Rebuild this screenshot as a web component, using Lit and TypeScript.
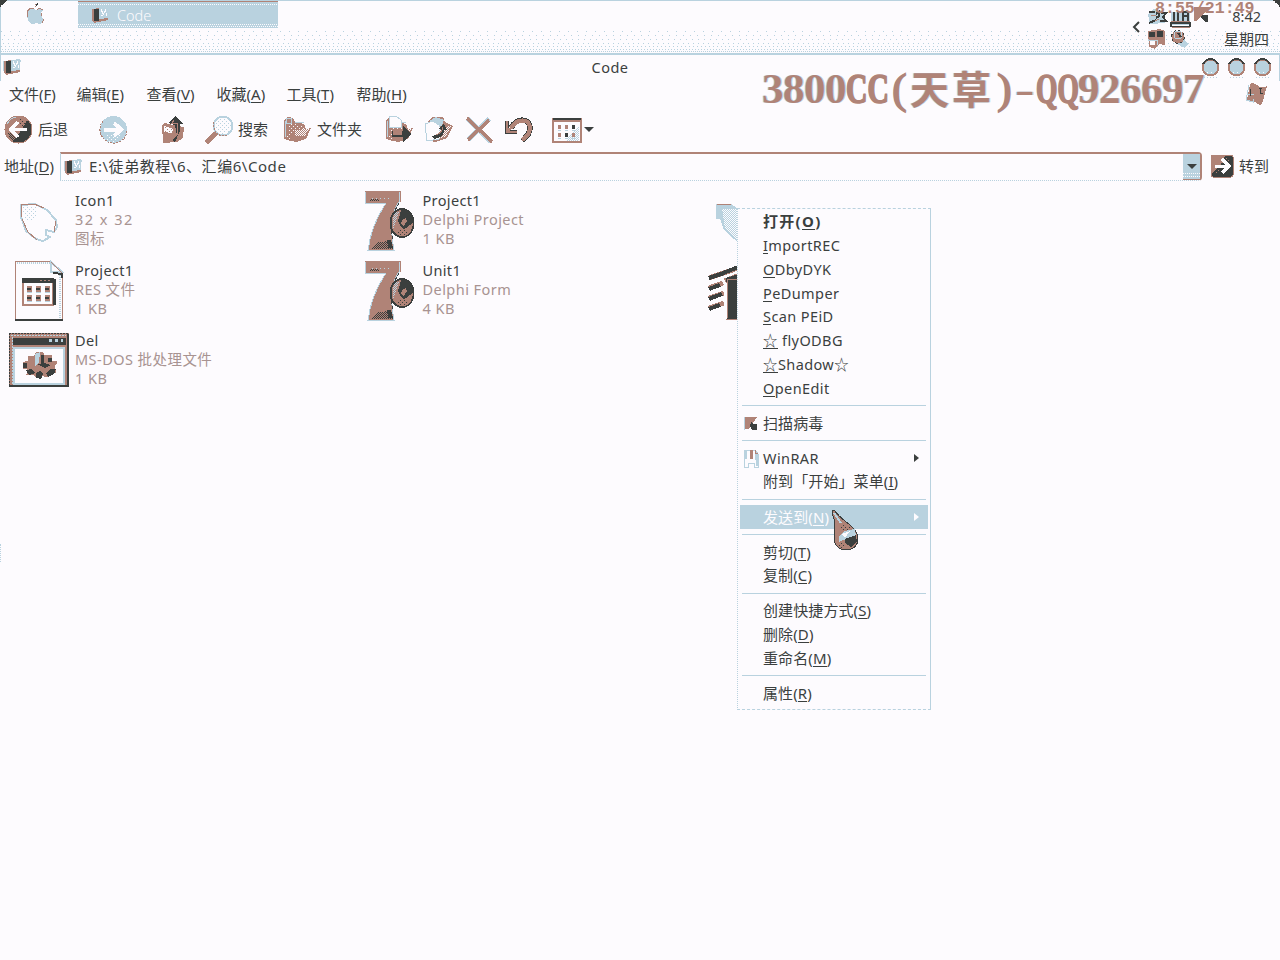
import { LitElement, html, svg, css, nothing } from "lit";
import { customElement } from "lit/decorators.js";

const B = "#b9d2df", R = "#b08377", K = "#3b3f3e", W = "#fdfbfe";

const dots = (id: string, fg: string, size = 2) => svg`<pattern id=${id} width=${size} height=${size} patternUnits="userSpaceOnUse"><rect width="1" height="1" fill=${fg}/>${size > 2 ? svg`<rect x=${size / 2} y=${size / 2} width="1" height="1" fill=${fg}/>` : svg`<rect x="1" y="1" width="1" height="1" fill=${fg}/>`}</pattern>`;
const defs = svg`<defs>${dots("b2", B)}${dots("b4", B, 4)}${dots("r2", R)}${dots("r4", R, 4)}${dots("k2", K)}${dots("k4", K, 4)}${dots("w2", W)}${dots("w4", W, 4)}</defs>`;

const draw = (w: number, h: number, body: unknown) => html`<svg width=${w} height=${h} viewBox="0 0 ${w} ${h}" shape-rendering="crispEdges">${defs}${body}</svg>`;

const book = draw(18, 16, svg`<path d="M1 2L8 1V12L17 11V13L3 16L1 13Z" fill=${R}/><path d="M8 1L17 0V11L8 12Z" fill=${B}/><path d="M3 2H8V14H3Z" fill=${K}/><path d="M10 2V4H11V6H12V8M14 2V4H13V6M15 6V9M10 8H12" fill="none" stroke=${W}/><path d="M0 2V12M17 1V3" stroke=${B}/>`);
const apple = draw(20, 24, svg`<path d="M10 8C6 5 1 7 1 13C1 18 4 22 7 22L10 21L13 22C16 22 18 19 18 17C14 15 14 10 17 8C15 6 12 6 10 8Z" fill=${B}/><path d="M8 7C4 5 1 8 1 12V15M17 8C14 6 13 6 11 8M15 11V14M18 17L16 21M9 5L12 2H9" stroke=${R} fill="none"/><path d="M10 4L12 1" stroke=${K}/>`);
const back = draw(29, 29, svg`<circle cx="14.5" cy="14.5" r="13.5" fill=${K} stroke=${R}/><path d="M1 14A13.5 13.5 0 0 1 24 5L21 9L14 20L8 27Q1 23 1 14Z" fill=${R}/><path d="M3 18H13V26H8Z" fill="url(#k2)"/><path d="M14 3L22 5L24 10L16 11Z" fill="url(#k4)"/><path d="M3 9Q6 3 12 2" fill="none" stroke=${B}/><path d="M23 14.5H8M14 7L7 14.5L14 22" fill="none" stroke=${W} stroke-width="3.6"/>`);
const forward = draw(29, 29, svg`<circle cx="14.5" cy="14.5" r="13.5" fill=${B}/><path d="M5 20H24L18 27H10Z" fill="url(#w4)"/><path d="M4 6A13.5 13.5 0 0 0 14 28A13 13 0 0 0 28 15" fill="none" stroke=${R} stroke-dasharray="2 1"/><path d="M5 14.5H20M15 8L22 14.5L15 21" fill="none" stroke=${W} stroke-width="4"/>`);
const folder = svg`<path d="M1 4L5 1L10 2L12 6L21 8L23 13L28 12L23 23L13 26L8 25L1 23Z" fill=${R}/><path d="M2 5V21M12 6L21 7" stroke=${B}/><path d="M6 7L20 10L21 14L11 15L7 23L4 21Z" fill="url(#w4)"/><path d="M12 14L26 13L22 20L12 20Z" fill="url(#w2)"/>`;
const folders = draw(29, 28, svg`${folder}<circle cx="6" cy="5" r="3" stroke=${B} fill=${R}/>`);
const up = draw(25, 29, svg`<path d="M1 10L4 8L12 10L23 12L22 23L16 27L2 28Z" fill=${R}/><path d="M3 11L12 14L11 18L3 17Z" fill=${W}/><path d="M3 11L12 14V20H3Z" fill="url(#r4)"/><path d="M14 27L19 16V9H23L14 1L7 8L14 10L16 20L11 25Z" fill=${K}/><path d="M13 5L11 8H16V20" fill="none" stroke=${R}/>`);
const search = draw(30, 30, svg`<path d="M12 18L2 28" stroke=${R} stroke-width="5"/><circle cx="19" cy="11" r="9.5" fill=${W} stroke=${B} stroke-width="2"/><circle cx="19" cy="11" r="8" fill="url(#b4)"/><path d="M10 7Q9 13 12 18Q17 22 23 20" stroke=${R} fill="none" stroke-dasharray="2 1"/>`);
const moveTo = draw(28, 28, svg`${folder}<path d="M4 1L11 0L16 4V11L4 11Z" fill=${W} stroke=${B}/><path d="M7 15H18V10L27 18L18 26V21H7Z" fill=${K}/><path d="M8 14H17V19H8Z" fill=${R}/>`);
const copyTo = draw(30, 28, svg`<path d="M4 5L9 1H19L21 6L29 10L23 22L11 26L3 24Z" fill=${R}/><path d="M5 5L12 1L20 4L18 10L8 8Z" fill=${B}/><path d="M1 8L9 5L15 9V23L3 25Z" fill=${W} stroke=${B}/><path d="M10 12L27 10L22 20L11 24Z" fill="url(#w2)"/><path d="M8 20Q17 19 17 13H14L20 8L23 14H20Q20 22 10 23" fill=${K}/><path d="M12 19Q18 17 19 11" fill="none" stroke=${R}/>`);
const del = draw(30, 28, svg`<path d="M4 3L27 26M25 3L4 24" stroke=${B} stroke-width="5"/><path d="M3 2L28 26M25 4L4 24" stroke=${R} stroke-width="3.6"/>`);
const undo = draw(30, 28, svg`<path d="M7 12C13 1 26 2 26 12C26 18 22 21 18 25" fill="none" stroke=${K} stroke-width="5.5"/><path d="M3 5V16H13" fill="none" stroke=${K} stroke-width="4"/><path d="M7 12C13 2 26 2 26 12C26 18 22 21 18 24" fill="none" stroke=${R} stroke-width="4.2"/><path d="M3 5V16H13M4 15L12 7" fill="none" stroke=${R} stroke-width="2.8"/>`);
const views = draw(30, 26, svg`<rect x=".5" y="1.5" width="28" height="23" fill=${W} stroke=${R} stroke-width="2"/><path d="M1 2H29" stroke=${K} stroke-width="2"/><rect x="2" y="3" width="26" height="2" fill=${R}/><path d="M19 16L27 9V24H14Z" fill="url(#b2)"/>${[0, 1, 2].map(i => [0, 1].map(j => svg`<rect x=${6 + i * 7} y=${8 + j * 8} width="3" height="4" fill=${i + j === 2 ? K : R}/><path d="M${6 + i * 7} ${13 + j * 8}h3" stroke=${B}/>`))}`);
const go = draw(24, 24, svg`<rect x="1" y="1" width="22" height="22" rx="2" fill=${K} stroke=${R}/><path d="M2 2H15L11 10L6 15L2 19Z" fill=${R}/><path d="M12 3H20V10H12ZM3 14H10V20H3Z" fill="url(#r4)"/><path d="M5 12H18M12 5L19 12L12 19" fill="none" stroke=${W} stroke-width="3"/>`);
const leafIcon = draw(40, 40, svg`<path d="M2 2L16 1L28 7L37 17L38 24L35 29L31 28L27 27L27 32L31 34L24 38L17 36L7 28L2 14Z" fill=${W} stroke=${B} stroke-width="2"/><path d="M4 4L19 4L16 17L5 17Z" fill="url(#b4)"/><path d="M2 14V1H15L25 5M3 16L9 29L18 37M37 18L35 29" stroke=${R} fill="none"/>`);
const resIcon = draw(50, 62, svg`<path d="M1 1H37L48 14V60H1Z" fill=${W} stroke=${R}/><path d="M3 3H36M46 15V58" stroke=${B} stroke-width="2" stroke-dasharray="1 1"/><path d="M37 2V12H48Z" fill=${W} stroke=${B} stroke-width="2"/><path d="M37 2L48 13" stroke=${R}/><path d="M39 13L48 14V18" stroke=${K} fill="none" stroke-width="2"/><path d="M1 60H49" stroke=${K} stroke-width="2"/><rect x="9" y="20" width="30" height="25" fill=${W} stroke=${R} stroke-width="2"/><path d="M8 20H40V45" fill="none" stroke=${K} stroke-width="3"/><rect x="8" y="18" width="32" height="5" fill=${K}/><path d="M26 20h10" stroke=${R} stroke-dasharray="2 2"/>${[0, 1, 2].map(i => [0, 1].map(j => svg`<rect x=${13 + i * 9} y=${26 + j * 9} width="5" height="7" fill=${R}/><rect x=${13 + i * 9} y=${28 + j * 9} width="4" height="2" fill=${K}/><path d="M${13 + i * 9} ${32 + j * 9}h5" stroke=${B}/>`))}`);
const batIcon = draw(62, 56, svg`<rect x="1" y="1" width="60" height="54" fill=${R}/><path d="M1 54H60V2" fill="none" stroke=${K} stroke-width="2"/><path d="M1 1H60M1 1V54" fill="none" stroke=${K} stroke-dasharray="2 1"/><path d="M3 3H58M4 5V52" fill="none" stroke=${B} stroke-dasharray="2 1"/><rect x="5" y="6" width="53" height="7" fill=${K}/><path d="M41 8.5h14" stroke=${B} stroke-width="3" stroke-dasharray="3 3"/><rect x="6" y="16" width="50" height="36" fill=${W} stroke=${B} stroke-width="2"/><path d="M15 31L20 29L20 24L26 25L28 21L34 20L37 24L43 23L44 29L49 30L46 35L48 40L41 41L39 45L33 43L29 46L26 42L19 42L20 37L15 36Z" fill=${R} stroke=${R}/><path d="M15 31h4v5h-4zM18 38l6-1 3 4-6 2zM28 41l4-2 3 3-2 5-5-1zM38 41l4-4h6l-2 5-6 3zM33 23h3v8l7 2-6 3-8-4h4zM40 26h4v4h-4z" fill=${K}/><path d="M27 22L32 20L31 30L27 34" fill=${B}/>`);
const delphiIcon = draw(52, 62, svg`<path d="M1 1H35V12C26 24 27 44 30 60H4C6 44 12 28 22 13H1Z" fill=${R} stroke=${B}/><path d="M1 1H36V12" fill="none" stroke=${R}/><path d="M7 7H27V9H7Z" fill="url(#b4)"/><path d="M6 9H15V11H6ZM13 52L27 51L29 59H8Z" fill="url(#k2)"/><path d="M35 13L29 24L27 38L29 50" stroke=${K} fill="none" stroke-dasharray="3 2"/><path d="M23 50H27L29 58H24Z" fill=${K}/><ellipse cx="38" cy="33" rx="11.5" ry="14" fill=${R} stroke=${K} stroke-width="2"/><path d="M37 19Q49 20 49 33L46 38L42 42L37 37L34 31L36 25Z" fill=${K}/><path d="M38 30L42 28L43 31L40 36L37 34Z" fill=${R}/><path d="M42 38L49 33Q48 44 41 46L32 42Z" fill=${R}/><path d="M29 28Q31 20 36 22L33 27L29 40Z" fill="url(#b2)"/><path d="M30 41L42 40L46 42L38 46Z" fill="url(#k4)"/>`);
const partLeaf = draw(32, 44, svg`<path d="M1 1H16L22 5V38L15 33L9 27L5 16H1Z" fill=${B}/><path d="M7 6H22V36L10 25Z" fill="url(#w2)"/><path d="M2 1H16" stroke=${R}/>`);
const partColumn = draw(64, 58, svg`<path d="M1 12L30 2M1 22L15 17M1 32L16 27M1 42L16 37M17 15L32 9" stroke=${R} stroke-width="5"/><path d="M1 12L13 8L30 1M1 23L12 19M1 33L14 28M1 43L12 39M18 14L31 10" stroke=${K} stroke-width="4"/><path d="M20 13H30V53H19Z" fill=${K} stroke=${R}/>`);
const kasp = draw(16, 15, svg`<path d="M1 1H14L6 13H1Z" fill=${R}/><path d="M1 14V1" stroke=${B}/><path d="M8 6L10 8H14V14H9L7 10Z" fill=${K}/>`);
const rar = draw(16, 19, svg`<path d="M1 1H12L15 5V18H11V14H5V18H1Z" fill=${W} stroke=${B}/><path d="M2 2H4V10H2ZM12 5H15V17H13Z" fill=${B}/><rect x="7" y="1" width="3" height="9" fill=${R}/><path d="M12 1V4H15" stroke=${R} fill="none"/>`);
const drop = draw(30, 44, svg`<path d="M1 1L4 2C11 13 27 17 27 30C27 37 21 41 15 41C8 41 3 36 3 29C3 19 6 15 1 4Z" fill=${R} stroke=${K}/><path d="M3 4L10 14" stroke=${B} stroke-width="2"/><path d="M8 27L13 22L24 20L25 27L17 29L8 33Z" fill=${B}/><path d="M11 25L19 22L14 29Z" fill=${W}/><path d="M14 30L25 26L26 33L20 38L14 34Z" fill=${K}/><path d="M8 33L16 37L12 40L7 37M9 14L20 18L18 23L10 21" fill="url(#k4)"/>`);
const flag = draw(24, 24, svg`<path d="M5 2Q9 0 12 3Q17 7 22 4L17 22Q14 24 10 20L2 18Z" fill=${R}/><path d="M4 3L1 18L8 20V17M3 12H9" fill="none" stroke=${B}/><path d="M14 6H17M15 6V11H18M5 7V14" stroke=${K} fill="none"/>`);
const tray = draw(64, 50, svg`
 <path d="M1 13L6 8L16 10L18 22L3 23Z" fill=${B}/><path d="M2 11H8M9 13L12 11V15L9 17M2 22L9 19M14 12H19L16 16L19 20H13" stroke=${K} stroke-width="2" fill="none"/><path d="M4 14H9M8 20L12 18" stroke=${R}/>
 <path d="M24 11H43V26H24Z" fill=${B}/><path d="M27 11V21M24 22H43V25H24ZM31 11V20M36 10V20M41 10V20M37 15H41M37 11H41" stroke=${K} stroke-width="2" fill="none"/><path d="M25 24H42" stroke=${W}/><path d="M24 20H43M25 26H43" stroke=${R}/>
 <path d="M47 6H63L50 20H47Z" fill=${R}/><path d="M55 14H61V21H58L54 17Z" fill=${K}/>
 <path d="M1 30L13 28L18 30V44L12 43L8 48L2 46Z" fill=${R}/><path d="M2 31H8V36H2ZM10 30H16V36H10Z" fill=${K}/><rect x="3" y="40" width="5" height="4" fill=${W}/><path d="M1 39H10V44" stroke=${B} fill="none"/>
 <path d="M34 36L41 43L38 47L30 43Z" fill=${B}/><circle cx="31" cy="36" r="6.5" fill=${R} stroke=${K} stroke-dasharray="3 2"/><circle cx="31" cy="34" r="4" fill="none" stroke=${B}/><path d="M31 32L34 36" stroke=${K} stroke-width="2"/>`);
const orb = draw(19, 22, svg`<circle cx="9.5" cy="9.5" r="7.8" fill=${B} stroke=${R} stroke-width="2"/><path d="M2 6Q5 1 9.5 1T17 6" fill="none" stroke=${K} stroke-width="2"/><path d="M6 14H13V16H6Z" fill="url(#w4)"/><path d="M3 19H16" stroke=${B} stroke-dasharray="1 2"/>`);

type Entry = { t: string; k?: string; rest?: string; icon?: unknown; sub?: boolean; hot?: boolean; bold?: boolean } | null;
const entries: Entry[] = [
  { t: "打开(", k: "O", rest: ")", bold: true },
  { t: "", k: "I", rest: "mportREC" }, { t: "", k: "O", rest: "DbyDYK" }, { t: "", k: "P", rest: "eDumper" },
  { t: "", k: "S", rest: "can PEiD" }, { t: "", k: "☆", rest: " flyODBG" }, { t: "", k: "☆", rest: "Shadow☆" }, { t: "", k: "O", rest: "penEdit" },
  null, { t: "扫描病毒", icon: kasp },
  null, { t: "WinRAR", icon: rar, sub: true }, { t: "附到「开始」菜单(", k: "I", rest: ")" },
  null, { t: "发送到(", k: "N", rest: ")", sub: true, hot: true },
  null, { t: "剪切(", k: "T", rest: ")" }, { t: "复制(", k: "C", rest: ")" },
  null, { t: "创建快捷方式(", k: "S", rest: ")" }, { t: "删除(", k: "D", rest: ")" }, { t: "重命名(", k: "M", rest: ")" },
  null, { t: "属性(", k: "R", rest: ")" },
];
const files = [
  { icon: leafIcon, l: ["Icon1", "32 x 32", "图标"] },
  { icon: delphiIcon, l: ["Project1", "Delphi Project", "1 KB"] },
  { icon: partLeaf, l: [] },
  { icon: resIcon, l: ["Project1", "RES 文件", "1 KB"] },
  { icon: delphiIcon, l: ["Unit1", "Delphi Form", "4 KB"] },
  { icon: partColumn, l: [] },
  { icon: batIcon, l: ["Del", "MS-DOS 批处理文件", "1 KB"] },
];

@customElement("app-root")
export class AppRoot extends LitElement {
  static styles = css`
    :host { display: block; --b: #b9d2df; --r: #b08377; --k: #3b3f3e; --w: #fdfbfe; }
    * { box-sizing: border-box; }
    svg { display: block; flex: none; }
    .desk { position: relative; width: 1280px; height: 960px; overflow: hidden; background: var(--w); color: var(--k); display: flex; flex-direction: column;
      font: 14.5px/19px "Noto Sans", "Noto Sans CJK SC", sans-serif; white-space: pre; }
    .cjk { font-size: 15px; }
    u { text-decoration: none; border-bottom: 1px solid var(--k); display: inline-block; line-height: 15px; }
    .task { height: 55px; flex: none; display: flex; padding: 0 11px 0 25px; border-bottom: 2px solid var(--b); border-left: 1px solid var(--b); border-top: 1px solid var(--b);
      background:
       conic-gradient(at 1px 1px, transparent 75%, var(--b) 0) 0 100% / 2px 2px repeat-x,
       conic-gradient(at 1px 1px, transparent 75%, var(--b) 0) 1px 48px / 3px 2px repeat-x,
       conic-gradient(at 1px 1px, transparent 75%, var(--b) 0) 0 45px / 4px 3px repeat-x,
       conic-gradient(at 1px 1px, transparent 75%, var(--b) 0) 2px 42px / 5px 3px repeat-x,
       conic-gradient(at 1px 1px, transparent 75%, var(--b) 0) 1px 38px / 6px 3px repeat-x,
       conic-gradient(at 1px 1px, transparent 75%, var(--b) 0) 3px 34px / 7px 4px repeat-x,
       conic-gradient(at 1px 1px, transparent 75%, var(--b) 0) 0 30px / 9px 4px repeat-x; }
    .apple { width: 52px; padding-top: 1px; }
    .tab { width: 200px; height: 27px; padding: 5px 0 0 13px; display: flex; gap: 8px; color: var(--w);
      background: conic-gradient(at 1px 1px, transparent 75%, var(--w) 0) 0 22px / 2px 2px repeat-x, conic-gradient(at 1px 1px, transparent 75%, var(--w) 0) 1px 24px / 2px 1px repeat-x, conic-gradient(at 1px 1px, transparent 75%, var(--w) 0) 0 2px / 2px 2px repeat-x, var(--b);
      border-top: 1px solid var(--r); }
    .tab span { font-weight: 300; margin-top: -1px; }
    .right { margin-left: auto; display: flex; }
    .chev { padding-top: 20px; margin-right: 6px; }
    .clock { width: 58px; text-align: right; display: flex; flex-direction: column; gap: 4px; padding: 6px 0 0; }
    .clock div:first-child { padding-right: 8px; font-size: 14.5px; }
    .title { height: 26px; flex: none; display: flex; align-items: center; padding: 0 7px 2px 2px; border-left: 1px solid var(--b); border-right: 1px solid var(--b); }
    .title span { flex: 1; text-align: center; letter-spacing: .5px; padding-right: 2px; }
    .orbs { display: flex; gap: 7px; padding-top: 4px; }
    .menus { height: 28px; flex: none; display: flex; align-items: center; padding: 0 0 2px 9px; }
    .menus span { width: 70px; }
    .menus span:first-child { width: 67.5px; }
    .menus svg { margin-left: auto; margin-right: 11px; }
    .tools { height: 42px; flex: none; display: flex; align-items: center; padding: 0 0 1px 4px; }
    .tools > * { flex: none; }
    .back { width: 66px; padding-left: 5px; }
    .find { width: 49px; padding-left: 4px; }
    .fold { width: 73px; padding-left: 5px; }
    .g2 { width: 2px; } .g10 { width: 10px; } .g11 { width: 11px; } .g18 { width: 18px; } .g33 { width: 33px; }
    .arrow { border: 5px solid transparent; border-top-color: var(--k); border-bottom: 0; }
    .addr { height: 30px; flex: none; display: flex; align-items: center; padding-left: 4px; }
    .box { width: 1142px; height: 29px; margin-left: 6px; padding-left: 3px; border-top: 2px solid var(--r); border-left: 1px solid var(--b); border-bottom: 1px dotted var(--b); border-right: 2px solid var(--r); border-radius: 0 4px 4px 0; display: flex; align-items: center; gap: 7px; }
    .path { letter-spacing: .55px; }
    .dd { margin-left: auto; width: 17px; height: 100%; background: conic-gradient(at 1px 1px, transparent 75%, var(--w) 0) 0 19px / 2px 2px repeat-x, conic-gradient(at 1px 1px, transparent 75%, var(--w) 0) 0 22px / 2px 2px repeat-x, var(--b); border-bottom: 1px solid var(--r); display: grid; place-items: center; }
    .go { margin: 0 5px 0 8px; }
    .files { display: grid; grid-template-columns: 347.5px 347.5px 1fr; grid-auto-rows: 70px; padding-top: 9px; }
    .file { display: flex; align-items: center; height: 62px; }
    .pic { width: 75px; height: 62px; flex: none; display: grid; place-items: center; padding-left: 3px; }
    .file:nth-child(3n+2) .pic { padding-left: 9px; }
    .file:first-child .pic { padding-top: 3px; }
    .file:last-child .pic { padding-bottom: 2px; }
    .file:nth-child(3) .pic { place-items: center start; padding-left: 20px; padding-top: 7px; }
    .file:nth-child(6) .pic { padding-left: 13px; padding-top: 6px; }
    .meta { color: #a89391; line-height: 19px; letter-spacing: .45px; padding-bottom: 4px; }
    .meta div:first-child { color: var(--k); letter-spacing: .35px; }
    .file:first-child .meta div:nth-child(2) { letter-spacing: 1.5px; }
    .ctx { position: absolute; left: 737px; top: 208px; width: 194px; height: 502px; padding: 1px 2px; background: var(--w); border: 1px dashed var(--b); border-left-style: dotted; border-right-style: solid; }
    .it { height: 23.75px; display: flex; align-items: center; padding-right: 9px; letter-spacing: .4px; }
    .it .cjk { letter-spacing: .1px; }
    .ic { width: 23px; flex: none; padding-left: 3px; }
    .bold { font-weight: 700; }
    .bold .cjk { letter-spacing: 1.3px; }
    .hot { background: var(--b); color: var(--w); }
    .hot u { border-color: var(--w); }
    .sub { margin-left: auto; border: 4px solid transparent; border-left: 5px solid currentColor; border-right: 0; }
    .sep { height: 11.3px; margin: 0 2px; display: grid; align-items: center; }
    .sep::after { content: ""; border-top: 1px solid var(--b); }
    .cursor { position: absolute; left: 831px; top: 509px; }
    .mark { position: absolute; left: 762px; top: 65px; display: flex; color: var(--r); font: bold 43px/48px "Liberation Serif", serif; letter-spacing: -.5px; text-shadow: 1px 0 var(--b), -1px 0 var(--b); }
    .mark .n { flex: none; letter-spacing: 0; transform-origin: 0 50%; }
    .mark .cc { width: 43px; transform: scaleX(.69); -webkit-text-stroke: 1.5px var(--r); }
    .mark .qq { width: 42px; transform: scaleX(.64); -webkit-text-stroke: 1.5px var(--r); }
    .mark .p { width: 21px; text-align: center; font-weight: 400; -webkit-text-stroke: 1.5px var(--r); }
    .mark .h { width: 21px; transform: scaleX(1.35); font-weight: 400; }
    .mark .zh { width: 84px; font: 600 39px/44px "Noto Sans CJK SC", sans-serif; letter-spacing: 3px; }
    .timer { position: absolute; left: 1155px; top: 0; color: var(--r); font: bold 16.6px/18px "Liberation Mono", monospace; }
    .edge { position: absolute; left: 0; top: 544px; height: 18px; border-left: 1px dotted var(--b); }
    .corner { position: absolute; top: 0; width: 7px; height: 7px; background: linear-gradient(135deg, var(--k) 50%, transparent 0); left: 0; }
    .corner.e { left: auto; right: 0; transform: scaleX(-1); }
  `;
  key(t: string, k: string) { return html`<span class="cjk">${t}(<u>${k}</u>)</span>`; }
  render() {
    return html`<div class="desk">
      <div class="task"><div class="apple">${apple}</div><div class="tab">${book}<span>Code</span></div>
        <div class="right"><div class="chev"><svg width="9" height="12"><path d="M7 1L2 6L7 11" fill="none" stroke="#3b3f3e" stroke-width="2"/></svg></div>${tray}
        <div class="clock"><div>8:42</div><div class="cjk">星期四</div></div></div></div>
      <div class="title">${book}<span>Code</span><div class="orbs">${orb}${orb}${orb}</div></div>
      <div class="menus">${[["文件", "F"], ["编辑", "E"], ["查看", "V"], ["收藏", "A"], ["工具", "T"], ["帮助", "H"]].map(([a, b]) => this.key(a, b))}${flag}</div>
      <div class="tools cjk">${back}<div class="back">后退</div>${forward}<div class="g33"></div>${up}<div class="g18"></div>${search}<div class="find">搜索</div>${folders}<div class="fold">文件夹</div>${moveTo}<div class="g11"></div>${copyTo}<div class="g10"></div>${del}<div class="g10"></div>${undo}<div class="g18"></div>${views}<div class="g2"></div><div class="arrow"></div></div>
      <div class="addr cjk">${this.key("地址", "D")}<div class="box">${book}<span class="path">E:\\徒弟教程\\6、汇编6\\Code</span><div class="dd"><div class="arrow"></div></div></div><div class="go">${go}</div>转到</div>
      <div class="files">${files.map(f => html`<div class="file"><div class="pic">${f.icon}</div><div class="meta">${f.l.map(x => html`<div>${x}</div>`)}</div></div>`)}</div>
      <div class="ctx">${entries.map(e => e === null ? html`<div class="sep"></div>` : html`<div class="it ${e.hot ? "hot" : ""} ${e.bold ? "bold" : ""}"><div class="ic">${e.icon ?? nothing}</div><span class=${/[\u4e00-\u9fff]/.test(e.t) ? "cjk" : ""}>${e.t}${e.k ? html`<u>${e.k}</u>` : nothing}${e.rest ?? ""}</span>${e.sub ? html`<div class="sub"></div>` : nothing}</div>`)}</div>
      <div class="cursor">${drop}</div>
      <div class="mark"><span>3800</span><span class="n cc">CC</span><span class="n p">(</span><span class="n zh">天草</span><span class="n p">)</span><span class="n h">-</span><span class="n qq">QQ</span><span>926697</span></div>
      <div class="timer">8:55/21:49</div><div class="edge"></div><div class="corner"></div><div class="corner e"></div>
    </div>`;
  }
}
